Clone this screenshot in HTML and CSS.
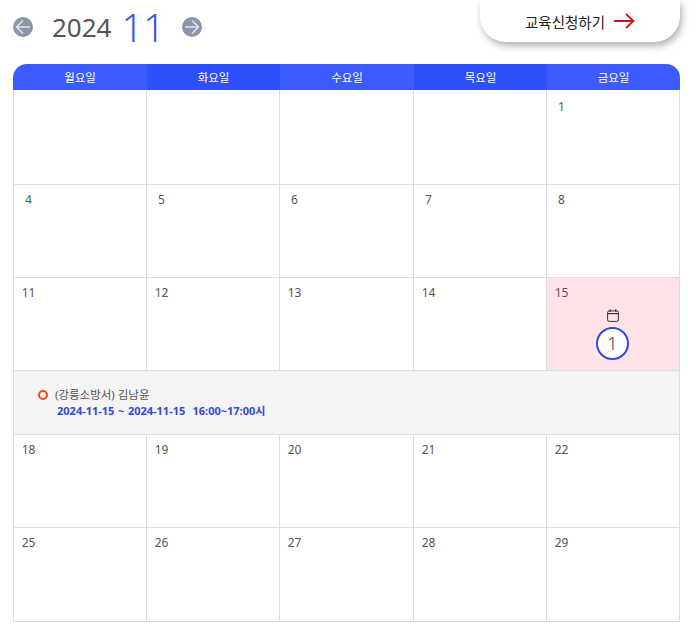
FILE: index.html
```html
<!DOCTYPE html>
<html lang="ko">
<head>
  <meta charset="UTF-8" />
  <meta name="viewport" content="width=device-width, initial-scale=1.0" />
  <title>교육일정</title>
  <link rel="stylesheet" href="styles.css">
</head>
<body>
  <div class="cal-wrap">
    <div class="cal-top">
      <div class="cal-title">
        <a class="month-btn">
          <svg viewBox="0 0 20 20" width="20" height="20"><circle cx="10" cy="10" r="10" fill="#8f95a8"/><path d="M17 10H3.5M10 3.5L3.5 10l6.5 6.5" fill="none" stroke="#e4e6ee" stroke-width="1.5"/></svg>
        </a>
        <span class="year">2024</span>
        <span class="month">11</span>
        <a class="month-btn">
          <svg viewBox="0 0 20 20" width="20" height="20"><circle cx="10" cy="10" r="10" fill="#8f95a8"/><path d="M3 10h13.5M10 3.5l6.5 6.5-6.5 6.5" fill="none" stroke="#e4e6ee" stroke-width="1.5"/></svg>
        </a>
      </div>
      <a class="apply-btn">
        <span>교육신청하기</span>
        <svg viewBox="0 0 21 16" width="21" height="16"><path d="M0 8h19.5M12 1l7.5 7-7.5 7" fill="none" stroke="#d0121f" stroke-width="1.8"/></svg>
      </a>
    </div>

    <table class="cal">
      <colgroup>
        <col class="col-wide">
        <col class="col-narrow">
        <col class="col-wide">
        <col class="col-narrow">
        <col class="col-narrow">
      </colgroup>
      <thead>
        <tr>
          <th>월요일</th>
          <th>화요일</th>
          <th>수요일</th>
          <th>목요일</th>
          <th>금요일</th>
        </tr>
      </thead>
      <tbody>
        <tr class="week-first">
          <td></td>
          <td></td>
          <td></td>
          <td></td>
          <td><span class="num">1</span></td>
        </tr>
        <tr>
          <td><span class="num">4</span></td>
          <td><span class="num">5</span></td>
          <td><span class="num">6</span></td>
          <td><span class="num">7</span></td>
          <td><span class="num">8</span></td>
        </tr>
        <tr>
          <td><span class="num">11</span></td>
          <td><span class="num">12</span></td>
          <td><span class="num">13</span></td>
          <td><span class="num">14</span></td>
          <td class="has-event">
            <span class="num">15</span>
            <div class="event-mark">
              <svg viewBox="0 0 12 13" width="12" height="13"><rect x="0.6" y="1.9" width="10.8" height="10.5" rx="1.6" fill="none" stroke="#333" stroke-width="1"/><path d="M0.6 4.6h10.8" stroke="#333" stroke-width="1.2"/><path d="M3.2 0.3v2.6M8.8 0.3v2.6" stroke="#333" stroke-width="1.1"/></svg>
              <span class="count">1</span>
            </div>
          </td>
        </tr>
        <tr class="detail">
          <td colspan="5">
            <div class="detail-name"><i class="dot"></i>(강릉소방서) 김남윤</div>
            <div class="detail-time">2024-11-15 ~ 2024-11-15 &nbsp;16:00~17:00시</div>
          </td>
        </tr>
        <tr>
          <td><span class="num">18</span></td>
          <td><span class="num">19</span></td>
          <td><span class="num">20</span></td>
          <td><span class="num">21</span></td>
          <td><span class="num">22</span></td>
        </tr>
        <tr class="week-last">
          <td><span class="num">25</span></td>
          <td><span class="num">26</span></td>
          <td><span class="num">27</span></td>
          <td><span class="num">28</span></td>
          <td><span class="num">29</span></td>
        </tr>
      </tbody>
    </table>
  </div>
</body>
</html>
```

FILE: styles.css
```css
body {
  margin: 0;
  background: #fff;
  font-family: "Noto Sans", "Noto Sans CJK KR", sans-serif;
  color: #555;
}

.cal-wrap {
  width: 667px;
  margin-left: 13px;
}

/* 상단 */
.cal-top {
  display: flex;
  justify-content: space-between;
  height: 64px;
}

.cal-title {
  display: flex;
  align-items: center;
  height: 54px;
}

.month-btn {
  display: flex;
}

.year {
  margin-left: 19px;
  font-size: 26px;
  color: #555;
}

.month {
  margin-left: 10px;
  margin-right: 17px;
  font-size: 38px;
  font-weight: 300;
  line-height: 46px;
  color: #2f5be7;
}

.apply-btn {
  display: flex;
  align-items: center;
  justify-content: center;
  gap: 9px;
  width: 200px;
  height: 42px;
  box-sizing: border-box;
  border-radius: 0 0 26px 26px;
  background: #fff;
  box-shadow: 2px 4px 7px rgba(0, 0, 0, 0.3);
  font-size: 14.5px;
  color: #222;
}

/* 달력 */
.cal {
  width: 667px;
  table-layout: fixed;
  border-collapse: separate;
  border-spacing: 0;
}

.col-wide {
  width: 134px;
}

.col-narrow {
  width: 133px;
}

.cal th {
  height: 26px;
  padding: 0;
  background: #3d5afe;
  font-size: 11.5px;
  font-weight: 400;
  color: #fff;
}

.cal th:nth-child(even) {
  background: #2f4ffb;
}

.cal th:first-child {
  border-top-left-radius: 14px;
}

.cal th:last-child {
  border-top-right-radius: 14px;
}

.cal td {
  padding: 6px 8px 0;
  box-sizing: border-box;
  height: 93px;
  vertical-align: top;
  border-right: 1px solid #ddd;
  border-bottom: 1px solid #ddd;
  font-size: 12px;
  line-height: 18px;
}

.cal td:first-child {
  border-left: 1px solid #ddd;
}

.cal .week-first td {
  height: 95px;
  padding-top: 8px;
}

.cal .week-last td {
  height: 94px;
}

.num {
  display: inline-block;
  min-width: 15px;
  margin-left: -1px;
  text-align: center;
}

.has-event {
  background: #ffe3e8;
}

.event-mark {
  display: flex;
  flex-direction: column;
  align-items: center;
  gap: 5px;
  margin-top: 7px;
  margin-right: 1px;
}

.event-mark svg {
  display: block;
}

.count {
  width: 33px;
  height: 33px;
  box-sizing: border-box;
  border: 2px solid #3348dd;
  border-radius: 50%;
  background: #fff;
  font-size: 18px;
  font-weight: 300;
  line-height: 29px;
  text-align: center;
  color: #444;
}

/* 상세 */
.cal .detail td {
  height: 64px;
  padding: 15px 0 0 24px;
  background: #f4f4f4;
}

.detail-name {
  display: flex;
  align-items: center;
  font-size: 11.5px;
  line-height: 18px;
}

.dot {
  width: 10px;
  height: 10px;
  box-sizing: border-box;
  margin-right: 7px;
  border: 2.5px solid #f04e1c;
  border-radius: 50%;
}

.detail-time {
  padding-left: 19px;
  font-size: 11px;
  line-height: 14px;
  font-weight: 700;
  word-spacing: 0.75px;
  color: #3348dd;
}
```
